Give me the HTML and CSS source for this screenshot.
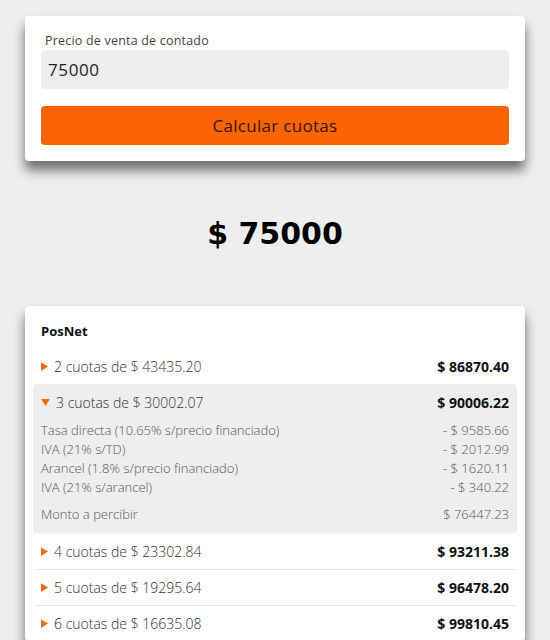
FILE: index.html
```html
<!DOCTYPE html>
<html lang="es">
<head>
<meta charset="utf-8">
<title>Calculadora de cuotas</title>
<link rel="stylesheet" href="styles.css">
</head>
<body>
<main class="page">
  <section class="card form-card">
    <label class="field-label" for="precio">Precio de venta de contado</label>
    <div class="input" id="precio">75000</div>
    <button class="btn" type="button">Calcular cuotas</button>
  </section>

  <h1 class="total">$ 75000</h1>

  <section class="card list-card">
    <h2 class="provider">PosNet</h2>
    <ul class="rows">
      <li class="row">
        <div class="row-head">
          <span class="left"><svg class="tri" viewBox="0 0 8 10" width="7" height="9"><path d="M0 0L8 5L0 10Z"/></svg>2 cuotas de $ 43435.20</span>
          <span class="right">$ 86870.40</span>
        </div>
      </li>
      <li class="row open">
        <div class="row-head">
          <span class="left"><svg class="tri" viewBox="0 0 10 8" width="9" height="7"><path d="M0 0L10 0L5 8Z"/></svg>3 cuotas de $ 30002.07</span>
          <span class="right">$ 90006.22</span>
        </div>
        <div class="details">
          <div class="d-line"><span>Tasa directa (10.65% s/precio financiado)</span><span>- $ 9585.66</span></div>
          <div class="d-line"><span>IVA (21% s/TD)</span><span>- $ 2012.99</span></div>
          <div class="d-line"><span>Arancel (1.8% s/precio financiado)</span><span>- $ 1620.11</span></div>
          <div class="d-line"><span>IVA (21% s/arancel)</span><span>- $ 340.22</span></div>
          <div class="d-line net"><span>Monto a percibir</span><span>$ 76447.23</span></div>
        </div>
      </li>
      <li class="row">
        <div class="row-head">
          <span class="left"><svg class="tri" viewBox="0 0 8 10" width="7" height="9"><path d="M0 0L8 5L0 10Z"/></svg>4 cuotas de $ 23302.84</span>
          <span class="right">$ 93211.38</span>
        </div>
      </li>
      <li class="row sep">
        <div class="row-head">
          <span class="left"><svg class="tri" viewBox="0 0 8 10" width="7" height="9"><path d="M0 0L8 5L0 10Z"/></svg>5 cuotas de $ 19295.64</span>
          <span class="right">$ 96478.20</span>
        </div>
      </li>
      <li class="row sep">
        <div class="row-head">
          <span class="left"><svg class="tri" viewBox="0 0 8 10" width="7" height="9"><path d="M0 0L8 5L0 10Z"/></svg>6 cuotas de $ 16635.08</span>
          <span class="right">$ 99810.45</span>
        </div>
      </li>
    </ul>
  </section>
</main>
</body>
</html>
```

FILE: styles.css
```css
* { box-sizing: border-box; }
html, body {
  margin: 0;
  padding: 0;
  background: #eeeeee;
  font-family: "Open Sans", "DejaVu Sans", sans-serif;
  color: #333;
}
.page {
  width: 500px;
  margin: 0 auto;
  padding: 16px 0 24px;
}
.card {
  background: #fff;
  border-radius: 4px;
  box-shadow: 0 9px 12px rgba(0, 0, 0, 0.55);
}
.form-card {
  padding: 16px;
  display: flex;
  flex-direction: column;
}
.field-label {
  font-size: 12.5px;
  line-height: 18px;
  color: #444;
  padding-left: 4px;
  letter-spacing: 0.2px;
}
.input {
  height: 39px;
  background: #eeeeee;
  border-radius: 4px;
  font-size: 17px;
  letter-spacing: 0.6px;
  line-height: 39px;
  padding-left: 7px;
  color: #222;
}
.btn {
  margin-top: 17px;
  height: 39px;
  border: 0;
  border-radius: 4px;
  background: #fb6402;
  font-family: inherit;
  font-size: 17px;
  letter-spacing: 0.3px;
  color: #3a1800;
  padding: 0;
}
.total {
  margin: 0;
  padding: 53px 0 52px;
  text-align: center;
  font-family: "DejaVu Sans", sans-serif;
  font-size: 30px;
  line-height: 40px;
  font-weight: 700;
  color: #000;
}
.list-card {
  padding: 16px 8px 0;
}
.provider {
  margin: 0 0 8px;
  padding-left: 8px;
  font-size: 13px;
  line-height: 18px;
  font-weight: 700;
  color: #111;
}
.rows {
  list-style: none;
  margin: 0;
  padding: 0;
}
.row {
  margin: 0 0 0 3px;
}
.row.sep {
  border-top: 1px solid #e6e6e6;
}
.row.sep .row-head {
  height: 35px;
}
.row.open {
  background: #eeeeee;
  border-radius: 4px;
  margin-left: 0;
}
.row-head {
  height: 36px;
  display: flex;
  align-items: center;
  justify-content: space-between;
  padding: 0 8px 0 5px;
  font-size: 14px;
}
.row.open .row-head {
  padding-left: 8px;
}
.left {
  display: flex;
  align-items: center;
  color: #333;
  font-weight: 300;
}
.tri {
  fill: #f26a10;
  margin-right: 6px;
}
.right {
  font-weight: 700;
  color: #111;
}
.details {
  padding: 1px 8px 9px;
  font-size: 13px;
  color: #555;
  font-weight: 300;
}
.d-line {
  display: flex;
  justify-content: space-between;
  line-height: 19px;
}
.d-line.net {
  margin-top: 8px;
}
```
